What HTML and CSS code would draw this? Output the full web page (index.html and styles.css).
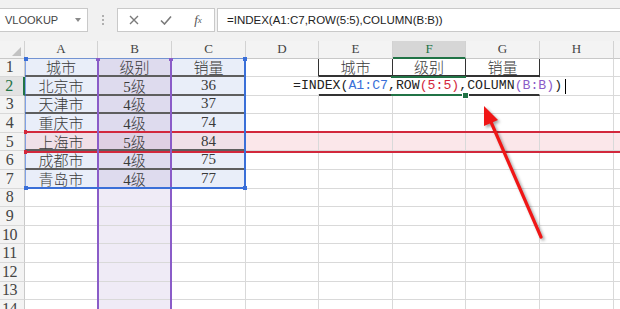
FILE: index.html
```html
<!DOCTYPE html>
<html lang="zh">
<head>
<meta charset="utf-8">
<title>Excel INDEX</title>
<link rel="stylesheet" href="styles.css">
</head>
<body>
<div class="toolbar">
  <div class="namebox"><span>VLOOKUP</span><i class="dd"></i></div>
  <div class="dots"><i></i><i></i><i></i></div>
  <div class="fxbox">
    <span class="ic"><svg width="10" height="10" viewBox="0 0 10 10"><path d="M1 1L9 9M9 1L1 9" stroke="#7a7a7a" stroke-width="1.4" fill="none"/></svg></span>
    <span class="ic"><svg width="12" height="10" viewBox="0 0 12 10"><path d="M1 5.5L4.5 9L11 1.5" stroke="#7a7a7a" stroke-width="1.6" fill="none"/></svg></span>
    <span class="ic fx">f<sub>x</sub></span>
  </div>
  <div class="formula">=INDEX(A1:C7,ROW(5:5),COLUMN(B:B))</div>
</div>

<div class="sheet">
  <div class="h corner"><i class="tri"></i></div>
  <div class="h">A</div><div class="h">B</div><div class="h">C</div><div class="h">D</div>
  <div class="h">E</div><div class="h on">F</div><div class="h">G</div><div class="h">H</div><div class="h"></div>

  <div class="rh">1</div>
  <div class="c tb tl">城市</div><div class="c tb b tl">级别</div><div class="c tb tl">销量</div>
  <div class="c bkr"></div><div class="c box">城市</div><div class="c box">级别</div><div class="c box">销量</div>
  <div class="c"></div><div class="c"></div>

  <div class="rh on">2</div>
  <div class="c tb tl">北京市</div><div class="c tb b tl">5级</div><div class="c tb tl">36</div>
  <div class="c"></div><div class="c bb"></div><div class="c"></div><div class="c bb"></div>
  <div class="c"></div><div class="c"></div>

  <div class="rh">3</div>
  <div class="c tb tl">天津市</div><div class="c tb b tl">4级</div><div class="c tb tl">37</div>
  <div class="c"></div><div class="c"></div><div class="c"></div><div class="c"></div>
  <div class="c"></div><div class="c"></div>

  <div class="rh">4</div>
  <div class="c tb tl">重庆市</div><div class="c tb b tl">4级</div><div class="c tb tl">74</div>
  <div class="c"></div><div class="c"></div><div class="c"></div><div class="c"></div>
  <div class="c"></div><div class="c"></div>

  <div class="rh">5</div>
  <div class="c r5a tl">上海市</div><div class="c r5b tl">5级</div><div class="c r5a tl">84</div>
  <div class="c r5"></div><div class="c r5"></div><div class="c r5"></div><div class="c r5"></div>
  <div class="c r5"></div><div class="c r5"></div>

  <div class="rh">6</div>
  <div class="c tb tl">成都市</div><div class="c tb b tl">4级</div><div class="c tb tl">75</div>
  <div class="c"></div><div class="c"></div><div class="c"></div><div class="c"></div>
  <div class="c"></div><div class="c"></div>

  <div class="rh">7</div>
  <div class="c tb">青岛市</div><div class="c tb b">4级</div><div class="c tb">77</div>
  <div class="c"></div><div class="c"></div><div class="c"></div><div class="c"></div>
  <div class="c"></div><div class="c"></div>

  <div class="rh">8</div>
  <div class="c"></div><div class="c b"></div><div class="c"></div><div class="c"></div>
  <div class="c"></div><div class="c"></div><div class="c"></div><div class="c"></div><div class="c"></div>

  <div class="rh">9</div>
  <div class="c"></div><div class="c b"></div><div class="c"></div><div class="c"></div>
  <div class="c"></div><div class="c"></div><div class="c"></div><div class="c"></div><div class="c"></div>

  <div class="rh">10</div>
  <div class="c"></div><div class="c b"></div><div class="c"></div><div class="c"></div>
  <div class="c"></div><div class="c"></div><div class="c"></div><div class="c"></div><div class="c"></div>

  <div class="rh">11</div>
  <div class="c"></div><div class="c b"></div><div class="c"></div><div class="c"></div>
  <div class="c"></div><div class="c"></div><div class="c"></div><div class="c"></div><div class="c"></div>

  <div class="rh">12</div>
  <div class="c"></div><div class="c b"></div><div class="c"></div><div class="c"></div>
  <div class="c"></div><div class="c"></div><div class="c"></div><div class="c"></div><div class="c"></div>

  <div class="rh">13</div>
  <div class="c"></div><div class="c b"></div><div class="c"></div><div class="c"></div>
  <div class="c"></div><div class="c"></div><div class="c"></div><div class="c"></div><div class="c"></div>

  <div class="rh">14</div>
  <div class="c"></div><div class="c b"></div><div class="c"></div><div class="c"></div>
  <div class="c"></div><div class="c"></div><div class="c"></div><div class="c"></div><div class="c"></div>

  <!-- reference highlights drawn over the grid -->
  <i class="ln red r1"></i><i class="ln red r2"></i>
  <i class="ln pur p1"></i><i class="ln pur p2"></i>
  <i class="ln blu bl"></i><i class="ln blu bt"></i><i class="ln blu br"></i><i class="ln blu bbm"></i>
  <i class="sq bsq s1"></i><i class="sq bsq s2"></i><i class="sq bsq s3"></i><i class="sq bsq s4"></i>
  <i class="sq psq s5"></i><i class="sq psq s6"></i>
  <i class="sq rsq s7"></i><i class="sq rsq s8"></i>

  <i class="active"></i>
  <div class="editor">=INDEX(<span class="cb">A1:C7</span>,ROW<span class="cr">(5:5)</span>,COLUMN<span class="cp">(B:B)</span>)<i class="caret"></i></div>
  <i class="handle"></i>
</div>

<svg class="arrow" width="620" height="309" viewBox="0 0 620 309">
  <line x1="541" y1="237" x2="491" y2="122" stroke="#f01616" stroke-width="3.2" stroke-linecap="round"/>
  <polygon points="484,106 498,120 484,126" fill="#f01616"/>
</svg>
</body>
</html>
```

FILE: styles.css
```css
html, body {
  margin: 0;
  padding: 0;
}
body {
  width: 620px;
  height: 309px;
  overflow: hidden;
  background: #fff;
  font-family: "Liberation Sans", Arial, sans-serif;
  position: relative;
}

/* ---------- toolbar ---------- */
.toolbar {
  height: 41px;
  box-sizing: border-box;
  padding-top: 8px;
  background: #f1f1f1;
  display: flex;
  align-items: flex-start;
}
.namebox {
  width: 88px;
  height: 24px;
  box-sizing: border-box;
  border: 1px solid #c9c9c9;
  border-left: none;
  background: #fff;
  display: flex;
  align-items: center;
  justify-content: space-between;
  padding: 0 6px 0 5px;
  font-size: 11px;
  color: #444;
}
.dd {
  width: 0;
  height: 0;
  border-left: 3px solid transparent;
  border-right: 3px solid transparent;
  border-top: 4px solid #8a8a8a;
}
.dots {
  width: 29px;
  height: 24px;
  display: flex;
  flex-direction: column;
  align-items: center;
  justify-content: center;
  gap: 2px;
}
.dots i {
  width: 2px;
  height: 2px;
  background: #b0b0b0;
}
.fxbox {
  width: 98px;
  height: 24px;
  box-sizing: border-box;
  border: 1px solid #c9c9c9;
  background: #fff;
  display: flex;
  align-items: center;
}
.ic {
  width: 32px;
  display: flex;
  justify-content: center;
  align-items: center;
}
.fx {
  flex: 1;
  font-family: "Liberation Serif", serif;
  font-style: italic;
  font-size: 13px;
  color: #555;
}
.fx sub {
  font-size: 9px;
  vertical-align: -2px;
}
.formula {
  flex: 1;
  margin-left: 2px;
  height: 24px;
  box-sizing: border-box;
  border: 1px solid #c9c9c9;
  border-right: none;
  background: #fff;
  padding-left: 9px;
  font-size: 11.5px;
  line-height: 22px;
  color: #222;
  white-space: nowrap;
}

/* ---------- sheet grid ---------- */
.sheet {
  position: relative;
  display: grid;
  grid-template-columns: 25px 73px 74px 74px 73px 74px 73px 74px 74px 7px;
  grid-template-rows: 17.5px repeat(14, 18.6px);
}
.h {
  box-sizing: border-box;
  background: #f3f3f3;
  border-right: 1px solid #d2d2d2;
  border-bottom: 1px solid #c8c8c8;
  display: flex;
  align-items: center;
  justify-content: center;
  font-family: "Liberation Serif", serif;
  font-size: 13px;
  color: #444;
}
.h.on {
  background: #d6d6d6;
  color: #217346;
  border-bottom: 2px solid #217346;
}
.corner {
  justify-content: flex-end;
  align-items: flex-end;
  padding: 0 3px 2px 0;
}
.tri {
  width: 0;
  height: 0;
  border-left: 9px solid transparent;
  border-bottom: 9px solid #c2c2c2;
}
.rh {
  box-sizing: border-box;
  background: #f3f3f3;
  border-right: 1px solid #c9c9c9;
  border-bottom: 1px solid #d8d8d8;
  display: flex;
  align-items: center;
  justify-content: center;
  padding-right: 5px;
  font-family: "Liberation Serif", serif;
  font-size: 16px;
  color: #444;
  letter-spacing: -0.5px;
}
.rh.on {
  background: #e2e2e2;
  color: #217346;
  border-right: 2px solid #217346;
}
.c {
  box-sizing: border-box;
  border-right: 1px solid #d9d9d9;
  border-bottom: 1px solid #d9d9d9;
  display: flex;
  align-items: center;
  justify-content: center;
  font-family: "Liberation Serif", "Noto Sans CJK SC", serif;
  font-size: 15px;
  font-weight: 300;
  color: #3a3a3a;
  white-space: nowrap;
  overflow: hidden;
}
.tb { background: #e9eef9; }
.tb.b { background: #dedbee; }
.b { background: #efebf6; }
.r5 { background: #fbe7ea; }
.r5a { background: #f0e0e8; }
.r5b { background: #dfd0e3; }
.tl { border-bottom: 2px solid #5e5e5e; }
.bkr { border-right: 1px solid #333; }
.box {
  border-right: 1px solid #333;
  border-bottom: 2px solid #333;
}
.bb { border-bottom: 2px solid #333; }

/* ---------- reference highlight overlays ---------- */
.ln { position: absolute; display: block; }
.red { left: 25px; right: 0; height: 2px; background: #d2283c; }
.r1 { top: 90px; }
.r2 { top: 110px; }
.pur { top: 17px; bottom: -20px; width: 2px; background: #8a5cc8; }
.p1 { left: 97px; }
.p2 { left: 170px; }
.blu { background: #3a6fd8; }
.bl { left: 25px; top: 17px; width: 1px; height: 131px; opacity: 0.6; }
.bt { left: 25px; top: 17px; width: 220px; height: 1px; opacity: 0.6; }
.br { left: 244px; top: 17px; width: 2px; height: 131px; }
.bbm { left: 25px; top: 146px; width: 221px; height: 2px; }
.sq { position: absolute; display: block; }
.bsq { width: 4px; height: 4px; background: #3a6fd8; }
.s1 { left: 24px; top: 16px; }
.s2 { left: 243px; top: 16px; }
.s3 { left: 24px; top: 145px; }
.s4 { left: 243px; top: 145px; }
.psq { width: 4px; height: 3px; background: #8a5cc8; }
.s5 { left: 96px; top: 17px; }
.s6 { left: 169px; top: 17px; }
.rsq { width: 3px; height: 4px; background: #d2283c; }
.s7 { left: 24px; top: 89px; }
.s8 { left: 24px; top: 109px; }

.active {
  position: absolute;
  display: block;
  left: 391px;
  top: 35px;
  width: 75px;
  height: 20px;
  box-sizing: border-box;
  border: 2px solid #217346;
}
.handle {
  position: absolute;
  display: block;
  left: 463px;
  top: 52px;
  width: 5px;
  height: 5px;
  background: #217346;
  border: 1px solid #fff;
  box-sizing: content-box;
  margin: -1px 0 0 -1px;
}
.editor {
  position: absolute;
  left: 291px;
  top: 37px;
  width: 277px;
  height: 16px;
  background: #fff;
  padding-left: 2px;
  box-sizing: border-box;
  font-family: "Liberation Mono", monospace;
  font-size: 13.2px;
  line-height: 16px;
  color: #222;
  white-space: nowrap;
  display: flex;
  align-items: center;
}
.cb { color: #3a6fd8; }
.cr { color: #d2283c; }
.cp { color: #8a5cc8; }
.caret {
  display: block;
  width: 1px;
  height: 15px;
  background: #000;
  margin-left: 3px;
}

/* ---------- annotation arrow ---------- */
.arrow {
  position: absolute;
  left: 0;
  top: 0;
  pointer-events: none;
  filter: drop-shadow(2px 2px 1.5px rgba(0, 0, 0, 0.35));
}
```
